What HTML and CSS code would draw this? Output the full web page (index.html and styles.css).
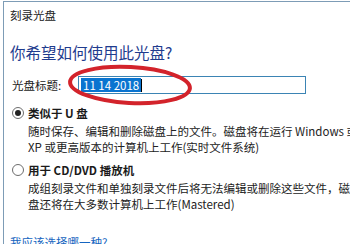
FILE: index.html
```html
<!DOCTYPE html>
<html lang="zh-CN">
<head>
  <meta charset="UTF-8" />
  <title>刻录光盘</title>
  <link rel="stylesheet" href="styles.css">
</head>
<body>
  <div class="window">
    <div class="caption">刻录光盘</div>
    <div class="heading">你希望如何使用此光盘?</div>

    <div class="title-row">
      <span class="title-label">光盘标题:</span>
      <div class="title-input"><span class="selected">11 14 2018</span><span class="caret"></span></div>
    </div>

    <div class="option">
      <span class="radio checked"></span>
      <span class="option-name">类似于 U 盘</span>
    </div>
    <div class="desc">随时保存、编辑和删除磁盘上的文件。磁盘将在运行 Windows 或<br>XP 或更高版本的计算机上工作(实时文件系统)</div>

    <div class="option second">
      <span class="radio"></span>
      <span class="option-name">用于 CD/DVD 播放机</span>
    </div>
    <div class="desc">成组刻录文件和单独刻录文件后将无法编辑或删除这些文件，磁盘<br>盘还将在大多数计算机上工作(Mastered)</div>

    <div class="help-link">我应该选择哪一种?</div>

    <svg class="mark" width="140" height="50" viewBox="0 0 140 50">
      <ellipse cx="66" cy="24" rx="60" ry="18" fill="none" stroke="#d3232b" stroke-width="4" transform="rotate(3 66 24)"/>
    </svg>
  </div>
</body>
</html>
```

FILE: styles.css
```css
body {
  margin: 0;
  overflow: hidden;
  background: #fff;
  font-family: "Noto Sans CJK SC", "Noto Sans", sans-serif;
  color: #1a1a1a;
}

.window {
  position: relative;
  width: 420px;
  height: 260px;
  margin: 1px 0 0 3px;
  border-top: 1px solid #7d9cb6;
  border-left: 1px solid #7d9cb6;
  font-size: 11.5px;
}

.caption {
  padding-left: 6px;
  line-height: 26px;
  font-size: 11.5px;
  color: #222;
}

.heading {
  margin-top: 12px;
  padding-left: 6px;
  line-height: 24px;
  font-size: 15.5px;
  color: #1f3c8e;
}

.title-row {
  display: flex;
  align-items: center;
  margin-top: 12px;
  padding-left: 8px;
  height: 18px;
}

.title-label {
  width: 66px;
}

.title-input {
  display: flex;
  align-items: center;
  box-sizing: border-box;
  width: 228px;
  height: 18px;
  padding-left: 2px;
  border: 1px solid #3b84b4;
}

.title-input .selected {
  background: #0a74d0;
  color: #fff;
  line-height: 14px;
  padding: 0 2px;
}

.title-input .caret {
  width: 1px;
  height: 13px;
  background: #000;
}

.option {
  display: flex;
  align-items: center;
  gap: 4px;
  margin-top: 10px;
  padding-left: 8px;
  line-height: 18px;
}

.option.second {
  margin-top: 6px;
}

.option-name {
  font-weight: bold;
}

.radio {
  box-sizing: border-box;
  width: 12px;
  height: 12px;
  border: 1px solid #6d6d6d;
  border-radius: 50%;
  position: relative;
}

.radio.checked::after {
  content: "";
  position: absolute;
  left: 2px;
  top: 2px;
  width: 6px;
  height: 6px;
  border-radius: 50%;
  background: #222;
}

.desc {
  margin-top: 1px;
  padding-left: 24px;
  line-height: 16px;
  white-space: nowrap;
  color: #222;
}

.help-link {
  margin-top: 22px;
  padding-left: 6px;
  line-height: 16px;
  color: #1565c0;
}

.mark {
  position: absolute;
  left: 60px;
  top: 59px;
}
```
